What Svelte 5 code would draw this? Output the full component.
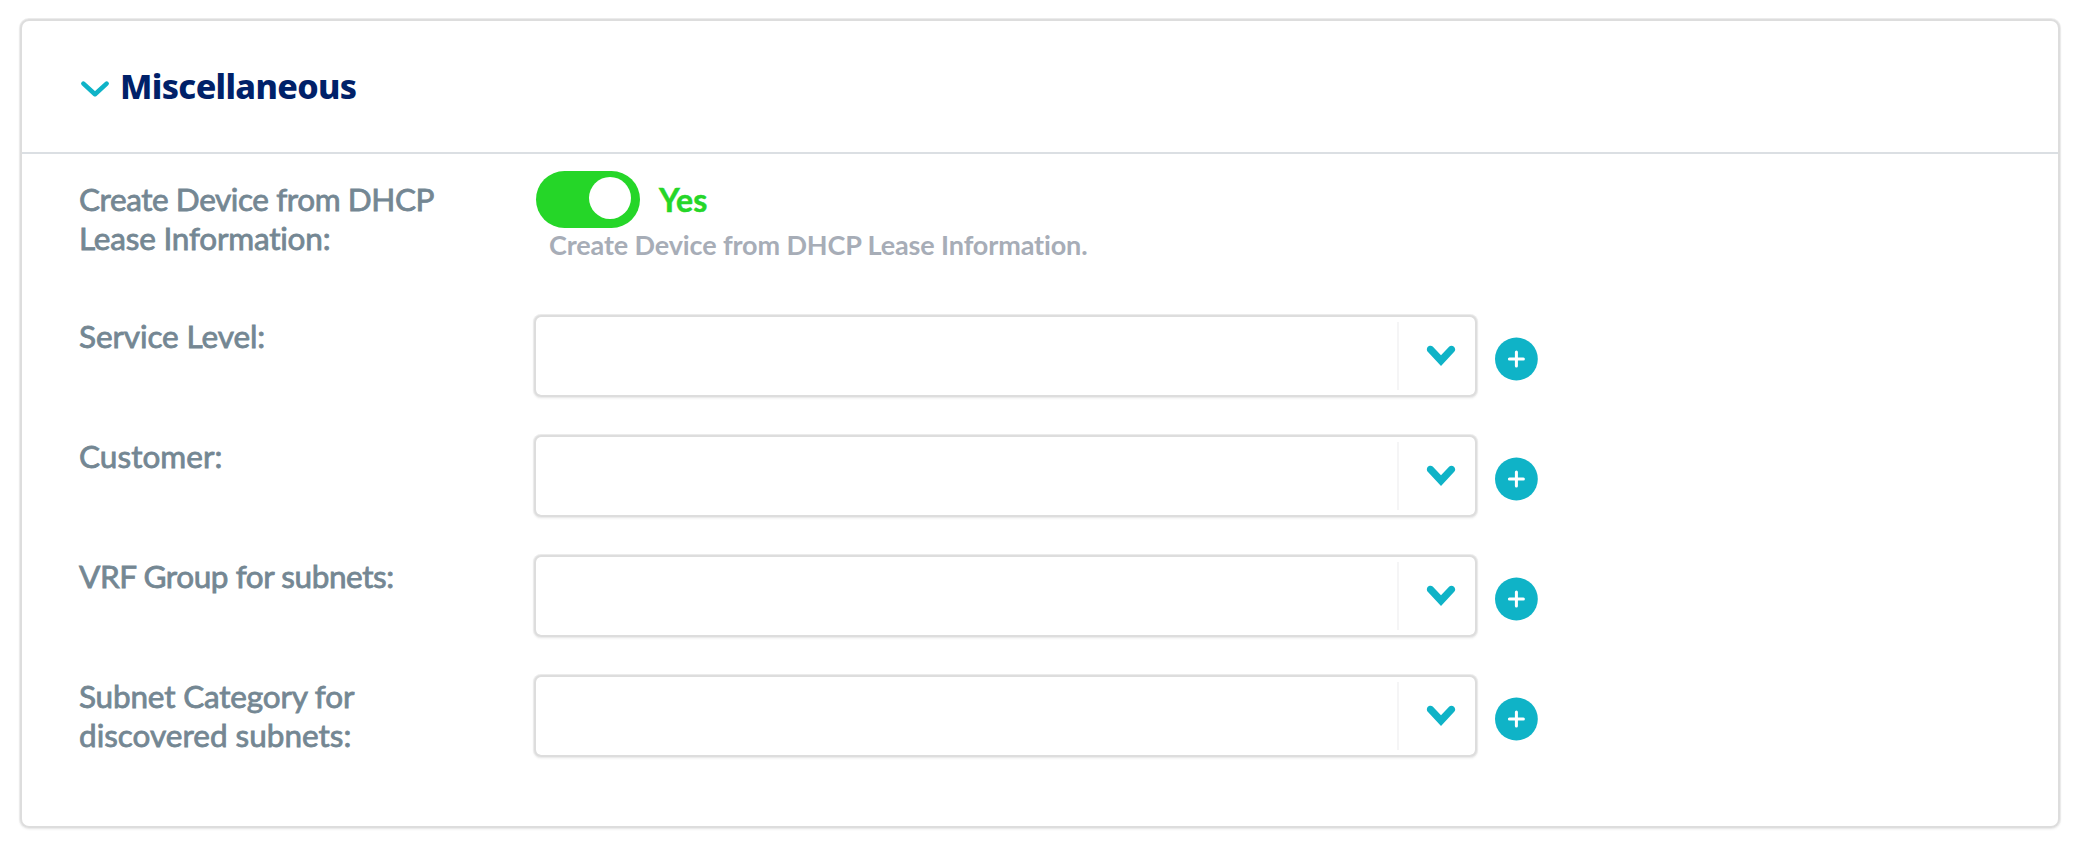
<script>
  let enabled = $state(true);

  const fields = [
    { id: 'service', lines: [{ text: 'Service Level:', track: -0.1 }] },
    { id: 'customer', lines: [{ text: 'Customer:', track: 0.05 }] },
    { id: 'vrf', lines: [{ text: 'VRF Group for subnets:', track: -0.42 }] },
    {
      id: 'category',
      lines: [
        { text: 'Subnet Category for', track: -0.18 },
        { text: 'discovered subnets:', track: 0 }
      ]
    }
  ];
</script>

<section class="panel">
  <header class="panel-head">
    <svg class="caret" width="30" height="20" viewBox="0 0 30 20" aria-hidden="true">
      <path d="M3.4 4.6 L15 15.2 L26.6 4.6" />
    </svg>
    <h2>Miscellaneous</h2>
  </header>

  <div class="panel-body">
    <div class="row first">
      <div class="label">
        <span class="tight">Create Device from DHCP</span>
        <span class="snug">Lease Information:</span>
      </div>
      <div class="toggle-cell">
        <div class="toggle-line">
          <button class="toggle" class:on={enabled} aria-label="Create Device" onclick={() => (enabled = !enabled)}>
            <span class="knob"></span>
          </button>
          <span class="state">{enabled ? 'Yes' : 'No'}</span>
        </div>
        <p class="hint">Create Device from DHCP Lease Information.</p>
      </div>
    </div>

    {#each fields as field (field.id)}
      <div class="row">
        <div class="label">
          {#each field.lines as line}
            <span style:letter-spacing="{line.track}px">{line.text}</span>
          {/each}
        </div>
        <div class="select">
          <div class="value"></div>
          <div class="arrow">
            <svg width="30" height="22" viewBox="0 0 30 22" aria-hidden="true">
              <path d="M3.7 0.8 C4.8 0.5 5.9 0.8 6.7 1.6 L15 10.2 L23.3 1.6 C25.9 -0.6 30.1 2.3 29 5.5 C28.8 6.2 28.5 6.6 28 7.1 L15 21 L2 7.1 C-0.2 4.9 0.9 1.5 3.7 0.8 Z" />
            </svg>
          </div>
        </div>
        <button class="add" aria-label="Add">
          <svg width="43" height="44" viewBox="0 0 43 44" aria-hidden="true">
            <circle cx="21.4" cy="22" r="21.4" />
            <path d="M14.4 22 H28.4 M21.4 15 V29" />
          </svg>
        </button>
      </div>
    {/each}
  </div>
</section>

<style>
  :global(body) {
    margin: 0;
    background: #fff;
  }
  :global(#app) {
    display: flow-root;
    min-height: 848px;
  }
  .panel {
    box-sizing: border-box;
    width: 2036px;
    height: 805px;
    margin: 21px 0 0 22px;
    border-radius: 7px;
    background: #fff;
    box-shadow: 0 0 0 2px #dddddd, 0 0 0 3px #ebebeb, 0 1px 2px 3px #f4f4f4;
    font-family: Lato, sans-serif;
    font-variant-ligatures: none;
    display: flow-root;
  }
  .panel-head {
    box-sizing: border-box;
    height: 133px;
    border-bottom: 2px solid #dbdfe3;
    padding: 0 0 0 58px;
    display: flex;
    align-items: flex-start;
  }
  .caret {
    display: block;
    margin-top: 58px;
  }
  .caret path {
    fill: none;
    stroke: #0fb3c7;
    stroke-width: 4.6;
    stroke-linecap: round;
    stroke-linejoin: round;
  }
  h2 {
    margin: 41px 0 0 10px;
    font: 800 34px/48px 'Noto Sans', sans-serif;
    letter-spacing: -0.65px;
    color: #002169;
    white-space: nowrap;
  }
  .row {
    display: grid;
    grid-template-columns: 457px 939px 63px;
    align-items: start;
    height: 120px;
    padding-left: 57px;
  }
  .row.first {
    height: 163px;
    grid-template-columns: 457px 939px;
  }
  .label {
    display: flex;
    flex-direction: column;
    font-size: 31.5px;
    line-height: 39px;
    color: #748793;
    white-space: nowrap;
    -webkit-text-stroke: 0.8px #748793;
  }
  .first .label {
    margin-top: 26px;
  }
  .tight {
    letter-spacing: -0.42px;
  }
  .snug {
    letter-spacing: -0.2px;
  }
  .toggle-cell {
    padding-top: 17px;
  }
  .toggle-line {
    display: flex;
    align-items: flex-start;
  }
  .toggle {
    width: 104px;
    height: 57px;
    padding: 6px 9px;
    border: 0;
    border-radius: 29px;
    background: #a7adb5;
    display: flex;
  }
  .toggle.on {
    background: #25d628;
    justify-content: flex-end;
  }
  .knob {
    width: 42px;
    height: 42px;
    border-radius: 50%;
    background: #fff;
  }
  .state {
    margin: 9px 0 0 19px;
    font-size: 32px;
    font-weight: 700;
    line-height: 39px;
    color: #25d628;
    -webkit-text-stroke: 0.5px #25d628;
  }
  .hint {
    margin: -1px 0 0 13px;
    font-size: 27px;
    font-weight: 700;
    line-height: 36px;
    letter-spacing: -0.12px;
    color: #a7adb7;
    white-space: nowrap;
  }
  .select {
    height: 78px;
    border-radius: 5px;
    box-shadow: 0 0 0 2px #dddddd, 0 0 0 3px #ebebeb, 0 1px 2px 3px #f4f4f4;
    display: flex;
    align-items: center;
  }
  .value {
    width: 861px;
    height: 68px;
    border-right: 2px solid #f5f5f6;
    box-sizing: content-box;
  }
  .arrow {
    flex: 1;
    height: 78px;
  }
  .arrow svg {
    display: block;
    margin: 28px 0 0 27px;
  }
  .arrow path {
    fill: #0fb3c7;
  }
  .add {
    margin: 20px 0 0 20px;
    padding: 0;
    border: 0;
    background: none;
    height: 44px;
    width: 43px;
  }
  .add svg {
    display: block;
  }
  .add circle {
    fill: #0fb3c7;
  }
  .add path {
    fill: none;
    stroke: #fff;
    stroke-width: 3;
    stroke-linecap: round;
  }
</style>
